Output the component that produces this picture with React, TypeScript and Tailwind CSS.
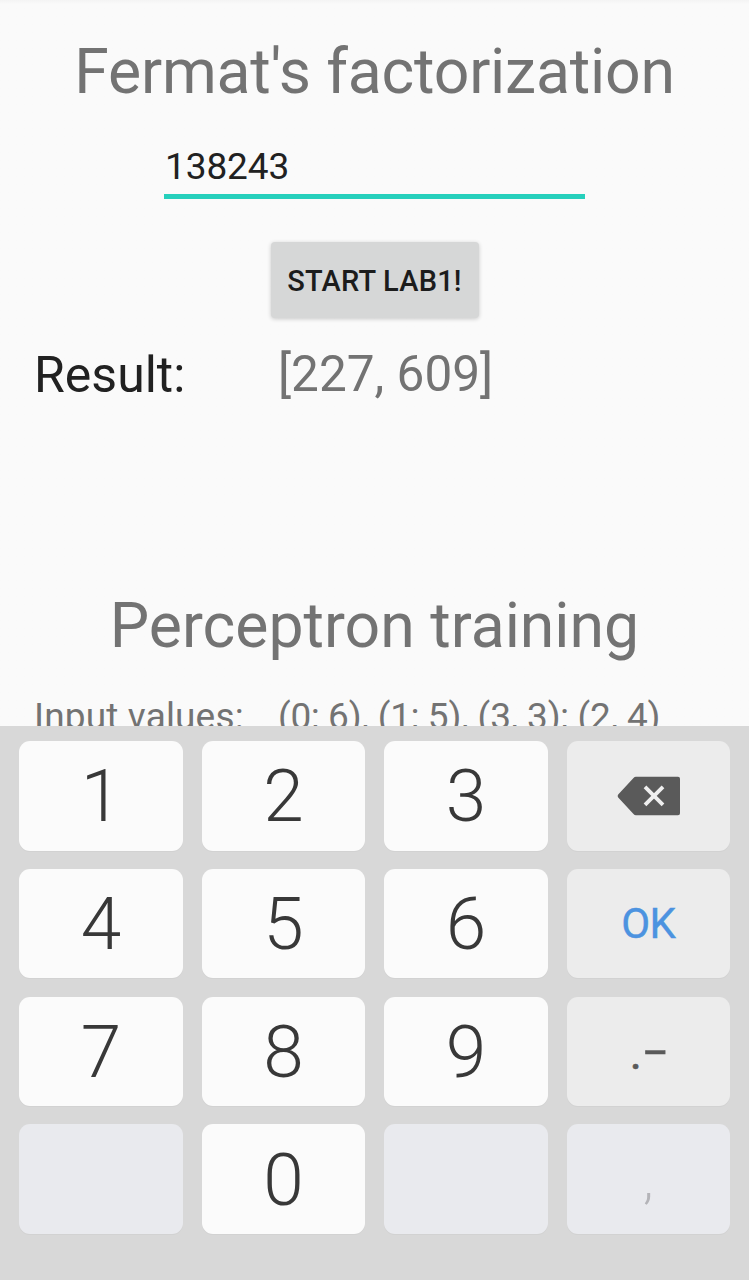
import React from 'react';

const keyBase = "flex h-[109.7px] items-center justify-center rounded-[11px] shadow-[0_1px_1px_rgba(0,0,0,0.03)]";

function Digit({ value }: { value: string }) {
  return (
    <button className={`${keyBase} bg-[#fbfbfb] pt-[2px] text-[73px] leading-none font-light text-[#383838]`}>
      <span>{value}</span>
    </button>
  );
}

export default function App() {
  return (
    <div className="flex h-[1280px] w-[749px] flex-col overflow-hidden bg-[#fafafa] font-[Roboto,sans-serif] text-[#737373]">
      <main className="h-[726px] overflow-hidden bg-linear-to-b from-[#f4f4f4] to-[#fafafa] to-[4px]">
        <h1 className="pt-[35px] text-center text-[62.5px] leading-[74px] tracking-[-0.2px]">Fermat&apos;s factorization</h1>
        <div className="mx-auto mt-[34px] h-[56px] w-[421px] border-b-[5px] border-[#26d0bc] pl-px text-[37px] leading-[48px] tracking-[-0.1px] text-[#212121]">138243</div>
        <button className="mx-auto mt-[43px] block h-[76px] w-[208px] rounded-[4px] bg-[#d6d7d7] pt-[3px] text-[29px] font-medium tracking-[0.2px] text-[#1c1c1c] shadow-[0_1px_4px_rgba(0,0,0,0.2)]">START LAB1!</button>
        <div className="mt-[26px] flex pl-[34px] text-[49.5px] leading-[60px]">
          <span className="w-[244px] pt-px text-[50px] text-[#212121]">Result:</span>
          <span>[227, 609]</span>
        </div>
        <h2 className="mt-[184px] text-center text-[62.5px] leading-[74px]">Perceptron training</h2>
        <div className="mt-[32px] flex pl-[34px] text-[37px] leading-[44px]">
          <span className="w-[244px] tracking-[0.15px]">Input values:</span>
          <span className="tracking-[-0.1px]">(0; 6), (1; 5), (3, 3); (2, 4)</span>
        </div>
      </main>
      <div className="grid flex-1 grid-cols-4 content-start gap-x-[19px] gap-y-[18.1px] bg-[#d8d8d8] pt-[15px] pr-[19px] pl-[19.4px]">
        <Digit value="1" />
        <Digit value="2" />
        <Digit value="3" />
        <button className={`${keyBase} bg-[#ececec] pl-px`} aria-label="Delete">
          <svg width="64" height="40" viewBox="0 0 64 40">
            <path d="M19 .7H61Q63 .7 63 2.7V37.3Q63 39.3 61 39.3H19Q17.5 39.3 16.5 38L1.2 21.5Q0 20 1.2 18.5L16.5 2Q17.5 .7 19 .7Z" fill="#5a5a5a" />
            <path d="M28 10.8L46 28.8M46 10.8L28 28.8" stroke="#efefef" strokeWidth="3.8" />
          </svg>
        </button>
        <Digit value="4" />
        <Digit value="5" />
        <Digit value="6" />
        <button className={`${keyBase} bg-[#ececec] text-[42px] tracking-[-0.6px] text-[#4c93e0] [-webkit-text-stroke:0.4px_#4c93e0]`}>OK</button>
        <Digit value="7" />
        <Digit value="8" />
        <Digit value="9" />
        <button className={`${keyBase} bg-[#ececec] pt-[5px] pr-[5px] text-[46px] text-[#5a5a5a]`}>
          <span className="[-webkit-text-stroke:0.6px_#5a5a5a]">.</span>
          <span className="mb-[6px] ml-[7px] inline-block scale-x-[1.75] [-webkit-text-stroke:0.6px_#5a5a5a]">-</span>
        </button>
        <div className={`${keyBase} bg-[#e9eaee]`} />
        <Digit value="0" />
        <div className={`${keyBase} bg-[#e9eaee]`} />
        <button className={`${keyBase} bg-[#e9eaee] pt-[4px] text-[52px] font-light text-[#b4b4b8]`}>,</button>
      </div>
    </div>
  );
}
